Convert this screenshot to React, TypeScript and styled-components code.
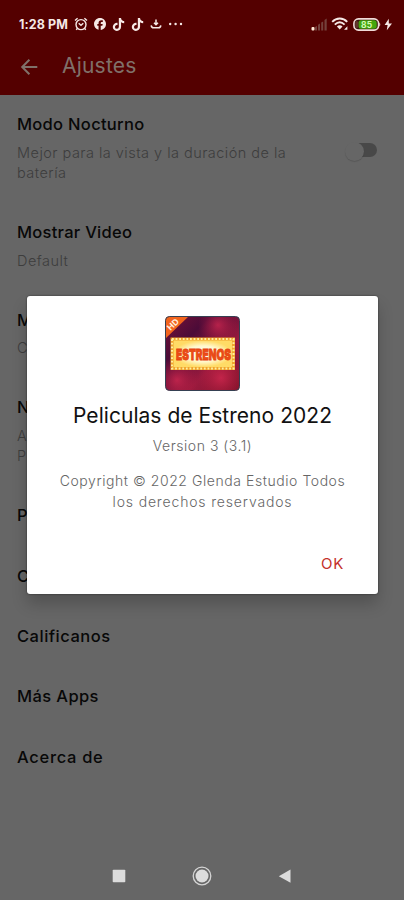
import React from "react";
import styled, { createGlobalStyle } from "styled-components";
import { FaFacebook, FaTiktok } from "react-icons/fa6";

const Global = createGlobalStyle`
  * { box-sizing: border-box; }
  html, body { margin: 0; padding: 0; background: #666; }
  body { font-family: Inter, "Open Sans", sans-serif; }
`;

const Screen = styled.div`
  position: relative;
  display: flex;
  flex-direction: column;
  width: 404px;
  height: 900px;
  overflow: hidden;
  background: #666666;
`;

const Header = styled.header`
  flex: none;
  height: 95px;
  background: #540000;
`;

const StatusBar = styled.div`
  display: flex;
  align-items: center;
  justify-content: space-between;
  height: 48px;
  padding: 0 12px 0 19px;
  color: #f6e9e6;
`;

const StatusGroup = styled.div<{ $gap: number }>`
  display: flex;
  align-items: center;
  gap: ${(p) => p.$gap}px;
  svg { display: block; flex: none; }
`;

const Clock = styled.span`
  width: 49px;
  font-size: 12.5px;
  font-weight: 700;
  letter-spacing: 0.1px;
  white-space: nowrap;
`;

const Toolbar = styled.div`
  display: flex;
  align-items: center;
  gap: 24px;
  height: 38px;
  padding-left: 20px;
  color: #80716a;
`;

const Title = styled.h1`
  margin: -3px 0 0;
  font-size: 21px;
  font-weight: 400;
  line-height: 32px;
  letter-spacing: 0.2px;
`;

const List = styled.main`
  flex: 1;
`;

const Row = styled.section`
  display: flex;
  align-items: center;
  justify-content: space-between;
  padding: 17px 26px 19.4px 17px;
`;

const RowText = styled.div`
  width: 300px;
`;

const RowTitle = styled.h2<{ $spacing: number }>`
  margin: 0;
  font-size: 16.5px;
  font-weight: 450;
  line-height: 24px;
  letter-spacing: ${(p) => p.$spacing}px;
  color: #080808;
`;

const RowDetail = styled.p`
  margin: 6.8px 0 0;
  font-size: 14.5px;
  font-weight: 350;
  line-height: 20.4px;
  letter-spacing: 0.47px;
  color: #3d3d3d;
  white-space: pre-line;
`;

const Toggle = styled.span`
  display: flex;
  align-items: center;
  width: 31px;
  height: 14px;
  margin: 5px 1px 0 0;
  border-radius: 7px;
  background: linear-gradient(90deg, transparent 40%, #484848 40%);
`;

const Thumb = styled.span`
  flex: none;
  width: 19px;
  height: 19px;
  margin: 3px 0 0 -1px;
  border-radius: 50%;
  background: #666;
  box-shadow: 0 1px 1px rgba(0, 0, 0, 0.14);
`;

const NavBar = styled.nav`
  display: flex;
  align-items: center;
  justify-content: space-between;
  flex: none;
  height: 48px;
  padding: 0 112px;
  svg { display: block; }
`;

const Overlay = styled.div`
  position: absolute;
  inset: 0;
  padding: 296px 26px 0 27px;
`;

const Dialog = styled.div`
  display: flex;
  flex-direction: column;
  align-items: center;
  height: 298px;
  padding-top: 20px;
  border-radius: 3px;
  background: #fff;
  box-shadow: 0 0 2px rgba(0, 0, 0, 0.6), 0 10px 16px rgba(0, 0, 0, 0.2);
  svg { display: block; }
`;

const AppName = styled.h3`
  margin: 9px 0 0;
  font-size: 21px;
  font-weight: 400;
  line-height: 32px;
  letter-spacing: 0.04px;
  color: #111;
  white-space: nowrap;
`;

const DialogLine = styled.p<{ $top: number; $spacing: number }>`
  margin: ${(p) => p.$top}px 0 0;
  font-size: 14px;
  font-weight: 300;
  line-height: 20.4px;
  letter-spacing: ${(p) => p.$spacing}px;
  color: #666;
  white-space: nowrap;
`;

const OkButton = styled.button`
  align-self: flex-end;
  margin: 41px 26px 0 0;
  padding: 0 8px;
  border: 0;
  background: none;
  font: 400 15px/20px Inter, sans-serif;
  letter-spacing: 0.7px;
  color: #c4302b;
`;

const AlarmIcon = () => (
  <svg width="14" height="14" viewBox="0 0 14 14" fill="none" stroke="currentColor" strokeWidth="1.4">
    <circle cx="7" cy="7.6" r="5" />
    <path d="M1 3.6 3.6 1.2M13 3.6 10.4 1.2M4.7 6.2 7 8.2l2.3-2" />
    <path d="m3.4 11.5-1.2 1.3M10.6 11.5l1.2 1.3" />
  </svg>
);

const DownloadIcon = () => (
  <svg width="12" height="12" viewBox="0 0 12 12" fill="none" stroke="currentColor" strokeWidth="1.5">
    <path d="M6 1.5v5M4 4.8 6 6.8 8 4.8M1.2 7.3c.2 1.8.8 2.5 2.3 2.5h5c1.5 0 2.1-.7 2.3-2.5" />
  </svg>
);

const DotsIcon = () => (
  <svg width="15" height="4" viewBox="0 0 15 4" fill="currentColor">
    <circle cx="2.2" cy="2" r="1.2" />
    <circle cx="7.6" cy="2" r="1.2" />
    <circle cx="13" cy="2" r="1.2" />
  </svg>
);

const SignalIcon = () => (
  <svg width="17" height="13" viewBox="0 0 17 13">
    <path d="M4 9 6 8v4.5H4zM7 6.8 9 5.6v6.9H7zM10.2 4.6l2-1.2v9.1h-2zM13.5 2.1l2.2-1.5v11.9h-2.2z" fill="#74403b" />
    <rect x="0.5" y="9" width="3" height="3.5" rx="1" fill="#ffe9d4" />
  </svg>
);

const WifiIcon = () => (
  <svg width="18" height="14" viewBox="0 0 18 14" fill="none" stroke="currentColor" strokeWidth="1.9">
    <path d="M1.2 4.8c4.4-4.4 10.8-4.4 15 0M3.8 7.6c3-2.9 6.8-2.9 9.8 0" />
    <path d="m5.9 9.4 2.8 3 2.8-3c-1.7-1.4-3.9-1.4-5.6 0z" fill="currentColor" stroke="none" />
    <path d="m13 12.8 3.4-3.5v3.5z" fill="currentColor" stroke="none" />
  </svg>
);

const BatteryIcon = () => (
  <svg width="28" height="13" viewBox="0 0 28 13">
    <rect x="0.9" y="0.9" width="24.7" height="11.2" rx="4.5" fill="#3a1710" stroke="#f0dbd8" strokeWidth="1.6" />
    <rect x="5.5" y="2.3" width="18.2" height="8.4" rx="2.5" fill="#44a60e" />
    <rect x="2.2" y="3" width="3" height="7" rx="1.5" fill="#62352c" />
    <path d="M26.3 4.5c1.3.7 1.3 3.3 0 4z" fill="#f0dbd8" />
    <text x="13.6" y="9.6" fontSize="8.5" fontWeight="700" textAnchor="middle" fill="#d2f7b4" fontFamily="Inter">85</text>
  </svg>
);

const BoltIcon = () => (
  <svg width="8" height="13" viewBox="0 0 8 13" fill="currentColor">
    <path d="M4.8.8.6 7h3l-.8 5.3L8 5.4H4.8z" />
  </svg>
);

const BackIcon = () => (
  <svg width="18" height="18" viewBox="0 0 18 18" fill="none" stroke="currentColor" strokeWidth="2">
    <path d="M17.3 9H2.5M9.4 1.8 2.2 9l7.2 7.2" />
  </svg>
);

const AppLogo = () => (
  <svg width="75" height="75" viewBox="0 0 75 75">
    <defs>
      <linearGradient id="night" x1="0" y1="0" x2="1" y2="1">
        <stop offset="0" stopColor="#7a1236" />
        <stop offset="0.3" stopColor="#4b0b38" />
        <stop offset="0.65" stopColor="#9a1a3e" />
        <stop offset="1" stopColor="#81142a" />
      </linearGradient>
      <radialGradient id="haze">
        <stop offset="0" stopColor="#d92a52" stopOpacity="0.7" />
        <stop offset="1" stopColor="#b71b3e" stopOpacity="0" />
      </radialGradient>
      <radialGradient id="marquee">
        <stop offset="0" stopColor="#ffffff" />
        <stop offset="0.6" stopColor="#fff8cc" />
        <stop offset="1" stopColor="#ffdb66" />
      </radialGradient>
      <clipPath id="tile"><rect x="0.5" y="0.5" width="74" height="74" rx="4" /></clipPath>
    </defs>
    <g clipPath="url(#tile)">
      <rect width="75" height="75" fill="url(#night)" />
      <circle cx="53" cy="9" r="20" fill="url(#haze)" />
      <circle cx="56" cy="62" r="23" fill="url(#haze)" />
      <circle cx="12" cy="64" r="22" fill="url(#haze)" />
      <rect x="5.5" y="21.5" width="64.5" height="32.5" fill="#f0a42c" />
      <rect x="7" y="23" width="61.5" height="29.5" fill="none" stroke="#fff0a0" strokeWidth="2" strokeDasharray="1.8 1.8" />
      <rect x="8.5" y="24.5" width="58.5" height="26.5" fill="url(#marquee)" />
      <text x="38.5" y="43.8" fontFamily="Inter" fontSize="15" fontWeight="900" textAnchor="middle" textLength="55" lengthAdjust="spacingAndGlyphs" fill="#ed4c16" stroke="#e4430f" strokeWidth="0.8">ESTRENOS</text>
      <path d="M0 0h24L0 23z" fill="#f2641d" />
      <text x="8" y="11.5" transform="rotate(-44 8 8.5)" fontFamily="Inter" fontSize="8.5" fontWeight="700" textAnchor="middle" fill="#fff1e0">HD</text>
    </g>
    <rect x="0.5" y="0.5" width="74" height="74" rx="4" fill="none" stroke="#354052" strokeWidth="1" />
  </svg>
);

type Item = { title: string; spacing?: number; detail?: string; toggle?: boolean };

const items: Item[] = [
  { title: "Modo Nocturno", spacing: 0.3, detail: "Mejor para la vista y la duración de la\nbatería", toggle: true },
  { title: "Mostrar Video", spacing: 0.27, detail: "Default" },
  { title: "M", detail: "C" },
  { title: "N", detail: "A\nP" },
  { title: "P" },
  { title: "C" },
  { title: "Calificanos", spacing: 0.5 },
  { title: "Más Apps", spacing: 0.4 },
  { title: "Acerca de", spacing: 0.7 },
];

export default function App() {
  return (
    <>
      <Global />
      <Screen>
        <Header>
          <StatusBar>
            <StatusGroup $gap={6}>
              <Clock>1:28 PM</Clock>
              <AlarmIcon />
              <FaFacebook size={12} />
              <FaTiktok size={13} />
              <FaTiktok size={13} />
              <DownloadIcon />
              <DotsIcon />
            </StatusGroup>
            <StatusGroup $gap={3.5}>
              <SignalIcon />
              <WifiIcon />
              <BatteryIcon />
              <BoltIcon />
            </StatusGroup>
          </StatusBar>
          <Toolbar>
            <BackIcon />
            <Title>Ajustes</Title>
          </Toolbar>
        </Header>
        <List>
          {items.map((it) => (
            <Row key={it.title}>
              <RowText>
                <RowTitle $spacing={it.spacing ?? 0}>{it.title}</RowTitle>
                {it.detail && <RowDetail>{it.detail}</RowDetail>}
              </RowText>
              {it.toggle && <Toggle><Thumb /></Toggle>}
            </Row>
          ))}
        </List>
        <NavBar>
          <svg width="14" height="14" viewBox="0 0 14 14"><rect x="0.7" y="0.7" width="12.6" height="12.6" rx="0.8" fill="#dcdcdc" /></svg>
          <svg width="20" height="20" viewBox="0 0 20 20">
            <circle cx="10" cy="10" r="8.8" fill="none" stroke="#d4d4d4" strokeWidth="1.3" />
            <circle cx="10" cy="10" r="6.5" fill="#dcdcdc" />
          </svg>
          <svg width="14" height="14" viewBox="0 0 14 14"><path d="M12.5.5v13.3L.8 7.2z" fill="#dcdcdc" /></svg>
        </NavBar>
        <Overlay>
          <Dialog role="dialog">
            <AppLogo />
            <AppName>Peliculas de Estreno 2022</AppName>
            <DialogLine $top={4} $spacing={0.53}>Version 3 (3.1)</DialogLine>
            <DialogLine $top={15} $spacing={0.56}>Copyright © 2022 Glenda Estudio Todos</DialogLine>
            <DialogLine $top={0.3} $spacing={0.84}>los derechos reservados</DialogLine>
            <OkButton>OK</OkButton>
          </Dialog>
        </Overlay>
      </Screen>
    </>
  );
}
